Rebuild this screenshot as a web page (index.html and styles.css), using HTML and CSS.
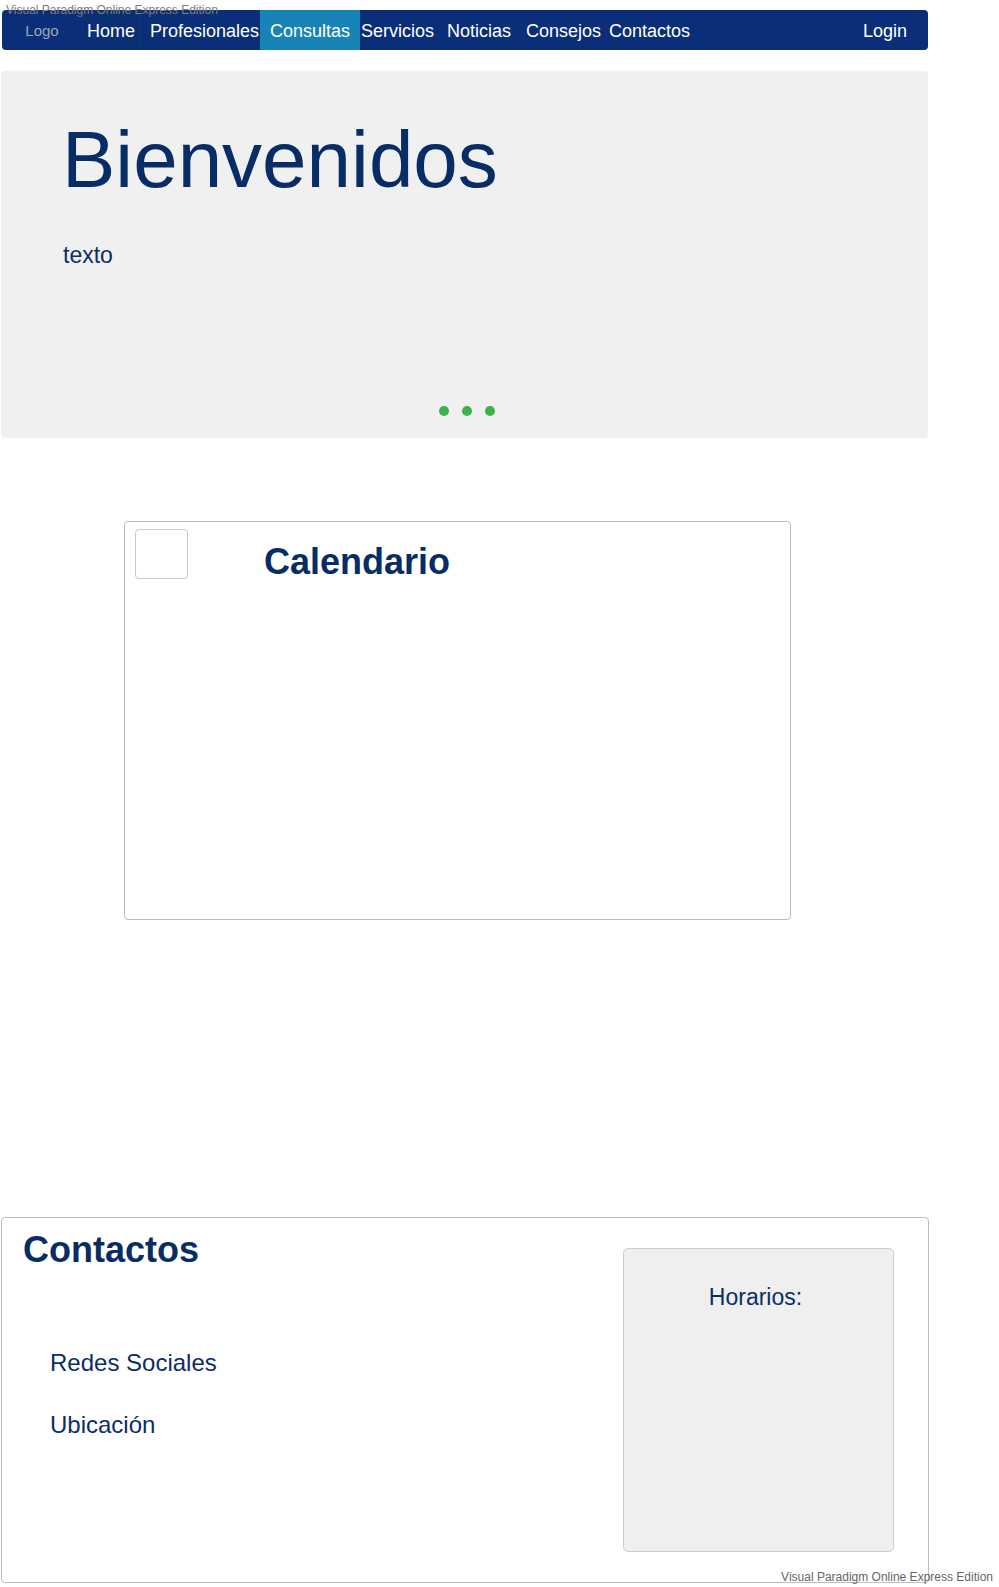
FILE: index.html
```html
<!DOCTYPE html>
<html lang="es">
<head>
<meta charset="utf-8">
<title>Inicio</title>
<link rel="stylesheet" href="styles.css">
</head>
<body>
<div class="page">
  <div class="watermark watermark-top">Visual Paradigm Online Express Edition</div>
  <nav class="nav">
    <span class="nav-item logo">Logo</span>
    <a class="nav-item home">Home</a>
    <a class="nav-item prof">Profesionales</a>
    <a class="nav-item consultas active">Consultas</a>
    <a class="nav-item servicios">Servicios</a>
    <a class="nav-item noticias">Noticias</a>
    <a class="nav-item consejos">Consejos</a>
    <a class="nav-item contactos">Contactos</a>
    <span class="nav-spacer"></span>
    <a class="nav-item login">Login</a>
  </nav>

  <section class="hero">
    <h1 class="hero-title">Bienvenidos</h1>
    <p class="hero-text">texto</p>
    <div class="dots">
      <span class="dot"></span>
      <span class="dot"></span>
      <span class="dot"></span>
    </div>
  </section>

  <section class="calendar">
    <div class="calendar-head">
      <div class="calendar-icon"></div>
      <h2 class="calendar-title">Calendario</h2>
    </div>
  </section>

  <section class="contact">
    <div class="contact-main">
      <h2 class="contact-title">Contactos</h2>
      <ul class="contact-list">
        <li>Redes Sociales</li>
        <li>Ubicación</li>
      </ul>
    </div>
    <div class="hours">
      <p class="hours-title">Horarios:</p>
    </div>
  </section>

  <div class="watermark watermark-bottom">Visual Paradigm Online Express Edition</div>
</div>
</body>
</html>
```

FILE: styles.css
```css
* { box-sizing: border-box; }

html, body {
  margin: 0;
  padding: 0;
  background: #ffffff;
}

body {
  font-family: "Liberation Sans", Arial, sans-serif;
  color: #0b2e66;
}

.page {
  position: relative;
  width: 999px;
  height: 1587px;
  overflow: hidden;
  padding-top: 10px;
}

.watermark {
  position: absolute;
  font-size: 12px;
  line-height: 12px;
  color: #7d7d7d;
  white-space: nowrap;
  z-index: 2;
}

.watermark-top {
  top: 4px;
  left: 6px;
}

.watermark-bottom {
  top: 1571px;
  right: 6px;
  color: #666666;
}

/* NAV */
.nav {
  display: flex;
  align-items: stretch;
  height: 40px;
  width: 926px;
  margin-left: 2px;
  background: #0a2e77;
  border-radius: 4px;
  overflow: hidden;
}

.nav-item {
  display: block;
  height: 40px;
  line-height: 42px;
  font-size: 18px;
  color: #ffffff;
  white-space: nowrap;
}

.logo {
  width: 80px;
  text-align: center;
  font-size: 15px;
  color: #9ea6bb;
}

.home {
  width: 58px;
  padding-left: 5px;
  background: #0b2f74;
  box-shadow: inset 1px 0 0 #0f3575, inset -1px 0 0 #0f3575;
}

.prof {
  width: 120px;
  padding-left: 10px;
}

.consultas {
  width: 100px;
  padding-left: 10px;
}

.active {
  background: #1883b5;
}

.servicios {
  width: 80px;
  padding-left: 1px;
}

.noticias {
  width: 80px;
  padding-left: 7px;
}

.consejos {
  width: 85px;
  padding-left: 6px;
}

.contactos {
  width: 95px;
  padding-left: 4px;
}

.nav-spacer {
  flex: 1;
}

.login {
  padding-right: 21px;
}

/* HERO */
.hero {
  display: flex;
  flex-direction: column;
  margin: 21px 0 0 1px;
  width: 927px;
  height: 367px;
  background: #f0f0f0;
  border-radius: 4px;
  padding: 49px 0 22px 61px;
}

.hero-title {
  margin: 0;
  font-size: 80px;
  line-height: 80px;
  font-weight: normal;
  color: #082d66;
}

.hero-text {
  margin: 44px 0 0 1px;
  font-size: 23px;
  line-height: 23px;
  color: #0b2e66;
}

.dots {
  margin-top: auto;
  margin-left: -61px;
  padding-left: 5px;
  display: flex;
  justify-content: center;
  gap: 13px;
}

.dot {
  width: 10px;
  height: 10px;
  border-radius: 50%;
  background: #3bb34a;
}

/* CALENDAR */
.calendar {
  margin: 83px 0 0 124px;
  width: 667px;
  height: 399px;
  border: 1px solid #bdbdbd;
  border-radius: 4px;
  padding: 7px 0 0 10px;
}

.calendar-head {
  display: flex;
  align-items: flex-start;
}

.calendar-icon {
  width: 53px;
  height: 50px;
  border: 1px solid #c8c8c8;
  border-radius: 4px;
}

.calendar-title {
  margin: 15px 0 0 76px;
  font-size: 36px;
  line-height: 35px;
  font-weight: bold;
  color: #082d66;
}

/* CONTACT */
.contact {
  display: flex;
  justify-content: space-between;
  align-items: flex-start;
  margin: 297px 0 0 1px;
  width: 928px;
  height: 366px;
  border: 1px solid #bdbdbd;
  border-radius: 4px;
}

.contact-main {
  padding: 14px 0 0 21px;
}

.contact-title {
  margin: 0;
  font-size: 36px;
  line-height: 35px;
  font-weight: bold;
  color: #082d66;
}

.contact-list {
  list-style: none;
  margin: 84px 0 0 27px;
  padding: 0;
  display: flex;
  flex-direction: column;
  gap: 38px;
}

.contact-list li {
  font-size: 24px;
  line-height: 24px;
  color: #0b2e66;
}

.hours {
  width: 271px;
  height: 304px;
  margin: 30px 34px 0 0;
  background: #efefef;
  border: 1px solid #cccccc;
  border-radius: 5px;
  padding-top: 37px;
  text-align: center;
}

.hours-title {
  margin: 0 0 0 -6px;
  font-size: 23px;
  line-height: 23px;
  color: #0b2e66;
}
```
